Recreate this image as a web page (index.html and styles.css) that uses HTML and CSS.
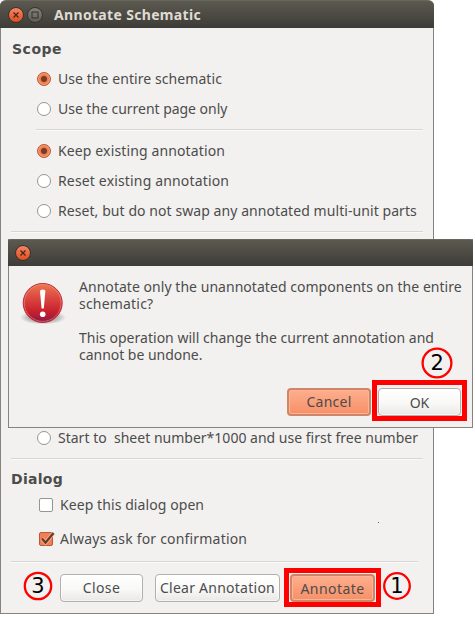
FILE: index.html
```html
<!DOCTYPE html>
<html lang="en">
<head>
<meta charset="utf-8">
<title>Annotate Schematic</title>
<link rel="stylesheet" href="styles.css">
</head>
<body>
<main class="window">
  <header class="titlebar">
    <svg class="ctl" viewBox="0 0 16 16"><circle cx="8" cy="8" r="7.5" fill="url(#orange)" stroke="#33302b"/><path d="M5.5 5.5l5 5M10.5 5.5l-5 5" stroke="#42291f" stroke-width="1.3"/>
      <defs><linearGradient id="orange" x1="0" y1="0" x2="0" y2="1"><stop offset="0" stop-color="#f58766"/><stop offset="1" stop-color="#e04d1c"/></linearGradient><linearGradient id="grey" x1="0" y1="0" x2="0" y2="1"><stop offset="0" stop-color="#85827a"/><stop offset="1" stop-color="#5e5c55"/></linearGradient></defs></svg>
    <svg class="ctl" viewBox="0 0 16 16"><circle cx="8" cy="8" r="7.5" fill="url(#grey)" stroke="#33322d"/><rect x="5" y="5" width="6" height="6" fill="none" stroke="#34332e"/></svg>
    <h1 class="title">Annotate Schematic</h1>
  </header>
  <div class="content">
    <h2 class="heading scope">Scope</h2>
    <div class="options">
      <div class="row"><i class="radio on"></i><span class="ls-11">Use the entire schematic</span></div>
      <div class="row"><i class="radio"></i><span class="ls-0">Use the current page only</span></div>
    </div>
    <hr class="line inset">
    <div class="options second">
      <div class="row"><i class="radio on"></i><span class="ls-17">Keep existing annotation</span></div>
      <div class="row"><i class="radio"></i><span class="ls-20">Reset existing annotation</span></div>
      <div class="row"><i class="radio"></i><span class="ls-9">Reset, but do not swap any annotated multi-unit parts</span></div>
    </div>
    <hr class="line">
    <div class="options start">
      <div class="row"><i class="radio"></i><span class="ls-3">Start to &nbsp;sheet number*1000 and use first free number</span></div>
    </div>
    <hr class="line">
    <h2 class="heading dialog">Dialog</h2>
    <div class="checks">
      <div class="row"><i class="check"></i><span class="ls-12">Keep this dialog open</span></div>
      <div class="row"><svg class="tick" viewBox="0 0 18 16"><rect x="1.5" y="1.5" width="13" height="13" rx="1.5" fill="#f17f55" stroke="#b65a3a"/><path d="M4 7.5l3.5 4.2L15.5 2" fill="none" stroke="#fbb393" stroke-width="4"/><path d="M4 7.5l3.5 4.2L15.5 2" fill="none" stroke="#693b2b" stroke-width="2.3"/></svg><span class="ls-22">Always ask for confirmation</span></div>
    </div>
    <i class="speck"></i>
    <hr class="line short">
    <footer class="actions">
      <svg class="num" viewBox="0 0 30 30"><circle cx="15" cy="15" r="13.2"/><text x="15" y="22.2">3</text></svg>
      <button class="btn close">Close</button>
      <button class="btn clear">Clear Annotation</button>
      <div class="mark"><button class="btn primary annotate">Annotate</button></div>
      <svg class="num one" viewBox="0 0 30 30"><circle cx="15" cy="15" r="12.8"/><text x="15" y="22.2">1</text></svg>
    </footer>
  </div>
</main>
<section class="modal">
  <header class="titlebar">
    <svg class="ctl" viewBox="0 0 16 16"><circle cx="8" cy="8" r="7.5" fill="url(#orange)" stroke="#33302b"/><path d="M5.5 5.5l5 5M10.5 5.5l-5 5" stroke="#42291f" stroke-width="1.3"/></svg>
  </header>
  <div class="message">
    <svg class="alert" viewBox="0 0 46 46"><defs><linearGradient id="red" x1="0" y1="0" x2="0" y2="1"><stop offset="0" stop-color="#ec7950"/><stop offset=".35" stop-color="#dc4a42"/><stop offset=".72" stop-color="#c8202d"/><stop offset="1" stop-color="#8c1746"/></linearGradient><radialGradient id="shade"><stop offset="0" stop-color="#999"/><stop offset=".65" stop-color="#bbb"/><stop offset="1" stop-color="#f2f1ef"/></radialGradient></defs>
      <ellipse cx="23" cy="36.5" rx="23" ry="7" fill="url(#shade)"/><circle cx="22.7" cy="22" r="19.5" fill="url(#red)" stroke="#bd2933"/><circle cx="22.7" cy="22" r="18.4" fill="none" stroke="#f19588" stroke-opacity=".55"/><path d="M20 10q0-1.5 2.7-1.5t2.7 1.5l-1.6 17.5h-2.2z" fill="#fff"/><circle cx="22.7" cy="33.3" r="2.8" fill="#fff"/></svg>
    <div class="copy">
      <p><span class="ls-6">Annotate only the unannotated components on the entire</span><br><span class="ls-26">schematic?</span></p>
      <p><span class="ls-4">This operation will change the current annotation and</span><br><span class="ls-0">cannot be undone.</span></p>
    </div>
  </div>
  <div class="answers">
    <button class="btn primary cancel">Cancel</button>
    <div class="mark"><button class="btn ok">OK</button></div>
  </div>
  <svg class="num two" viewBox="0 0 32 32"><circle cx="16" cy="16" r="14.4"/><text x="16.3" y="23.2">2</text></svg>
</section>
</body>
</html>
```
FILE: styles.css
```css
* { box-sizing: border-box; }
body { margin: 0; background: #fff; color: #4c4c4c; font: 14px/17px "Noto Sans", sans-serif; }
h1, h2, p { margin: 0; }

.window { width: 434px; height: 614px; background: #f2f1ef; border: 1px solid #85827f; border-top: 0; border-radius: 6px 6px 0 0; }
.titlebar { display: flex; align-items: center; height: 28px; margin: 0 -1px; padding: 0 0 0 8px; gap: 3px; background: linear-gradient(#5c5950, #3d3c37); border-top: 1px solid #69665c; border-radius: 6px 6px 0 0; }
.ctl { width: 16px; height: 16px; }
.title { margin-left: 8px; color: #dfdbd2; font-size: 14px; line-height: 17px; font-weight: 700; letter-spacing: .33px; white-space: nowrap; }

.content { padding: 13px 10px 0; }
.heading { font: bold 14px/17px "DejaVu Sans", sans-serif; }
.scope { margin-left: 1px; letter-spacing: .5px; }
.dialog { margin-top: 11px; letter-spacing: .28px; }
.options { display: flex; flex-direction: column; gap: 13px; margin: 12px 0 0 26px; }
.row { display: flex; align-items: center; height: 17px; gap: 7px; white-space: nowrap; }
.line { width: 412px; height: 2px; margin: 12px 0 0; border: 0; border-top: 1px solid #d8d6d3; background: #fafafa; }
.inset { width: 387px; margin-left: 25px; }
.second { margin-top: 11px; }
.start { margin-top: 196px; }
.radio { width: 14px; height: 14px; border: 1px solid #979592; border-radius: 50%; background: #fff; }
.radio.on { border-color: #b95531; background: radial-gradient(circle, #783d29 0 2.6px, #f2804f 3.6px 4.6px, #f7a17d 5.5px, #f07c4e 6.5px); }
.checks { display: flex; flex-direction: column; gap: 17px; margin: 8px 0 0 28px; }
.check { width: 14px; height: 14px; border: 1px solid #979592; border-radius: 2px; background: #fff; }
.tick { width: 18px; height: 16px; margin: 0 -3px 0 -1px; }
.speck { display: block; width: 1px; height: 1px; margin: -25px 0 38px 367px; background: #666; }
.short { width: 407px; }

.btn { height: 28px; padding: 0; border: 1px solid #b3afab; border-radius: 4px; background: linear-gradient(#fff, #f8f8f7 55%, #e9e8e6); box-shadow: inset 0 0 0 1px #fff8; color: #4c4c4c; font: 14px/17px "Noto Sans", sans-serif; white-space: nowrap; }
.primary { border: 2px solid #cf8567; background: linear-gradient(#feae8d, #f69068); box-shadow: inset 0 0 0 1px #ffb595; }
.mark { border: 5px solid #f00; }
.actions { display: flex; align-items: center; height: 39px; margin: 5px -6px 0 12px; }
.num { flex: none; width: 30px; height: 30px; margin-bottom: 4px; overflow: visible; }
.num circle { fill: none; stroke: #f00; stroke-width: 2.3; }
.num text { font: 21px "DejaVu Sans", sans-serif; fill: #000; text-anchor: middle; }
.actions .mark { width: 97px; height: 39px; margin-left: 4px; padding: 1px 1px 0; }
.close { width: 83px; margin-left: 7px; letter-spacing: .4px; }
.clear { width: 125px; margin-left: 12px; letter-spacing: .25px; }
.annotate { display: block; width: 85px; letter-spacing: .43px; }
.one { margin-left: 1px; }

.modal { position: absolute; left: 8px; top: 239px; width: 465px; height: 189px; background: #f2f1ef; border: 1px solid #85827f; border-top: 0; }
.modal .titlebar { height: 27px; padding-left: 7px; border-radius: 2px 2px 0 0; }
.message { display: flex; margin: 12px 0 0 11px; gap: 13px; }
.alert { flex: none; width: 46px; height: 46px; margin-top: 3px; }
.copy { display: grid; gap: 17px; white-space: nowrap; }
.answers { display: flex; align-items: center; height: 41px; margin: 17px 0 0 278px; }
.answers .mark { width: 95px; height: 41px; margin-left: 1px; padding: 3px 0 0 1px; }
.cancel { width: 84px; margin-top: 2px; letter-spacing: .24px; }
.ok { display: block; width: 83px; }
.two { position: absolute; left: 412px; top: 108px; width: 32px; height: 32px; }

.ls-0 { letter-spacing: -.03px; }
.ls-3 { letter-spacing: .01px; }
.ls-4 { letter-spacing: .02px; }
.ls-6 { letter-spacing: .04px; }
.ls-9 { letter-spacing: .07px; }
.ls-11 { letter-spacing: .07px; }
.ls-12 { letter-spacing: .08px; }
.ls-17 { letter-spacing: .13px; }
.ls-20 { letter-spacing: .16px; }
.ls-22 { letter-spacing: .19px; }
.ls-26 { letter-spacing: .2px; }
```
